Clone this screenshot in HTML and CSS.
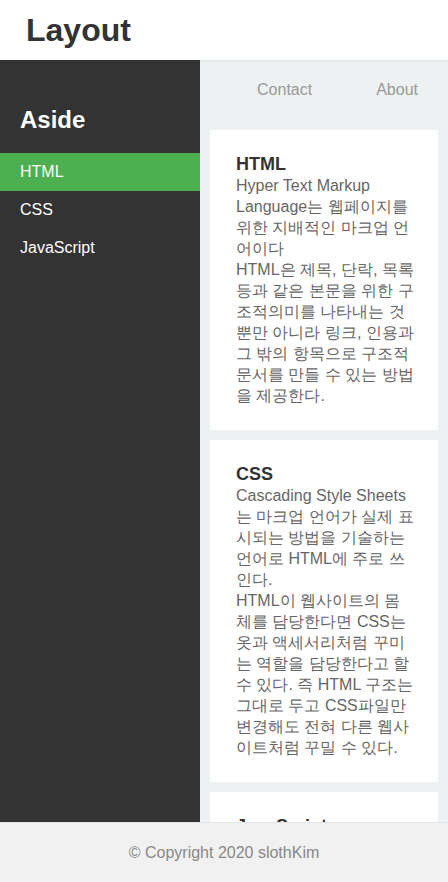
FILE: index.html
```html
<!DOCTYPE html>
<html lang="ko">
<head>
<meta charset="utf-8">
<title>Layout</title>
<link rel="stylesheet" href="styles.css">
</head>
<body>
<header class="site-header">
  <h1 class="logo">Layout</h1>
</header>
<div class="wrap">
  <aside class="aside">
    <h2 class="aside-title">Aside</h2>
    <ul class="menu">
      <li class="menu-item active">HTML</li>
      <li class="menu-item">CSS</li>
      <li class="menu-item">JavaScript</li>
    </ul>
  </aside>
  <main class="main">
    <nav class="nav">
      <a class="nav-link">Contact</a>
      <a class="nav-link">About</a>
    </nav>
    <section class="card">
      <h3 class="card-title">HTML</h3>
      <p class="card-text">Hyper Text Markup Language는 웹페이지를 위한 지배적인 마크업 언어이다<br>HTML은 제목, 단락, 목록 등과 같은 본문을 위한 구조적의미를 나타내는 것 뿐만 아니라 링크, 인용과 그 밖의 항목으로 구조적 문서를 만들 수 있는 방법을 제공한다.</p>
    </section>
    <section class="card">
      <h3 class="card-title">CSS</h3>
      <p class="card-text">Cascading Style Sheets는 마크업 언어가 실제 표시되는 방법을 기술하는 언어로 HTML에 주로 쓰인다.<br>HTML이 웹사이트의 몸체를 담당한다면 CSS는 옷과 액세서리처럼 꾸미는 역할을 담당한다고 할 수 있다. 즉 HTML 구조는 그대로 두고 CSS파일만 변경해도 전혀 다른 웹사이트처럼 꾸밀 수 있다.</p>
    </section>
    <section class="card">
      <h3 class="card-title">JavaScript</h3>
      <p class="card-text">JavaScript는 웹페이지에 동적인 기능을 더하는 프로그래밍 언어이다.</p>
    </section>
  </main>
</div>
<footer class="footer">© Copyright 2020 slothKim</footer>
</body>
</html>
```

FILE: styles.css
```css
* { box-sizing: border-box; }
html, body {
  margin: 0;
  padding: 0;
}
body {
  font-family: "Liberation Sans", Arial, sans-serif;
  font-size: 16px;
  color: #333;
  background: #eef1f2;
}
.site-header {
  position: relative;
  z-index: 2;
  height: 60px;
  background: #fff;
  display: flex;
  align-items: center;
  padding-left: 26px;
  box-shadow: 0 1px 2px rgba(0, 0, 0, 0.08);
}
.logo {
  margin: 0;
  font-size: 32px;
  line-height: 36px;
  font-weight: bold;
  color: #333;
}
.wrap {
  display: grid;
  grid-template-columns: 200px 1fr;
  min-height: calc(100vh - 60px);
}
.aside {
  background: #333;
  padding-top: 46px;
}
.aside-title {
  margin: 0 0 19px;
  padding-left: 20px;
  font-size: 24px;
  line-height: 28px;
  font-weight: bold;
  color: #fff;
}
.menu {
  list-style: none;
  margin: 0;
  padding: 0;
}
.menu-item {
  padding: 10px 20px;
  line-height: 18px;
  color: #fff;
}
.menu-item.active {
  background: #4caf50;
}
.main {
  padding: 0 10px 70px;
}
.nav {
  height: 60px;
  display: flex;
  justify-content: flex-end;
  align-items: center;
  margin-bottom: 10px;
  margin-right: -10px;
}
.nav-link {
  padding: 0 30px 0 34px;
  color: #999;
  font-size: 16px;
}
.card {
  background: #fff;
  padding: 24px 24px 24px 26px;
  margin-bottom: 10px;
}
.card-title {
  margin: 0;
  font-size: 18px;
  line-height: 21px;
  font-weight: bold;
  color: #333;
}
.card-text {
  margin: 0;
  font-size: 16px;
  line-height: 21px;
  color: #666;
}
.footer {
  position: fixed;
  left: 0;
  right: 0;
  bottom: 0;
  z-index: 3;
  height: 60px;
  background: #f1f1f1;
  border-top: 1px solid #dfe5e7;
  display: flex;
  align-items: center;
  justify-content: center;
  color: #888;
  font-size: 16px;
}
```
